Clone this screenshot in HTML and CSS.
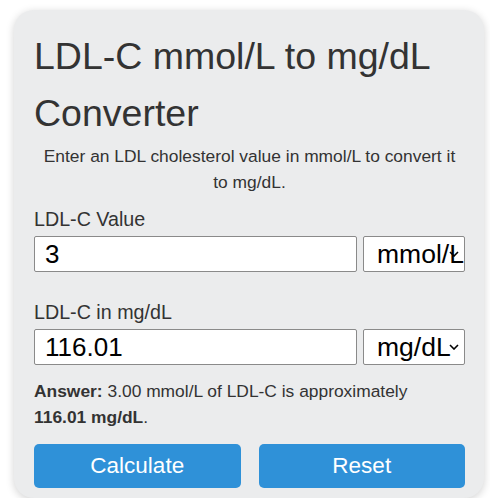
FILE: index.html
```html
<!DOCTYPE html>
<html>
<head>
<meta charset="utf-8">
<link rel="stylesheet" href="styles.css">
</head>
<body>
<div class="card">
  <h1 class="title">LDL-C mmol/L to mg/dL Converter</h1>
  <p class="intro">Enter an LDL cholesterol value in mmol/L to convert it to mg/dL.</p>
  <div class="field">
    <label class="label">LDL-C Value</label>
    <div class="row">
      <input class="num" type="text" value="3">
      <span class="unit-wrap">
        <select class="unit"><option>mmol/L</option></select>
        <svg class="chev" width="10" height="6" viewBox="0 0 10 6"><path d="M1 1 L5 5 L9 1" fill="none" stroke="#000" stroke-width="1.6"/></svg>
      </span>
    </div>
  </div>
  <div class="field">
    <label class="label">LDL-C in mg/dL</label>
    <div class="row">
      <input class="num" type="text" value="116.01">
      <span class="unit-wrap">
        <select class="unit"><option>mg/dL</option></select>
        <svg class="chev" width="10" height="6" viewBox="0 0 10 6"><path d="M1 1 L5 5 L9 1" fill="none" stroke="#000" stroke-width="1.6"/></svg>
      </span>
    </div>
  </div>
  <p class="answer"><b>Answer:</b> 3.00 mmol/L of LDL-C is approximately <b>116.01 mg/dL</b>.</p>
  <div class="buttons">
    <button class="btn">Calculate</button>
    <button class="btn">Reset</button>
  </div>
</div>
</body>
</html>
```
FILE: styles.css
```css
html, body {
  margin: 0;
  padding: 0;
  background: #fff;
}
body {
  font-family: "Liberation Sans", Arial, sans-serif;
  color: #333;
  line-height: 1.6;
  padding: 10px 6px 0 14px;
}
.card {
  width: 470px;
  height: 488px;
  box-sizing: border-box;
  background: #ebeced;
  border-radius: 20px;
  box-shadow: 0 2px 8px rgba(0, 0, 0, 0.18);
  padding: 18px 19px 10px 20px;
}
.title {
  margin: 0;
  font-size: 37.5px;
  font-weight: normal;
  line-height: 57px;
}
.intro {
  margin: 2px 0 0;
  padding: 0 5px;
  font-size: 17.4px;
  line-height: 25.6px;
  text-align: center;
}
.field {
  margin-top: 9px;
}
.field + .field {
  margin-top: 25px;
}
.label {
  display: block;
  font-size: 19.7px;
  line-height: 30px;
  margin-bottom: 2px;
}
.row {
  display: flex;
  gap: 6px;
}
.num {
  flex: 1;
  min-width: 0;
  height: 36px;
  box-sizing: border-box;
  border: 1px solid #8a8a8a;
  border-radius: 2px;
  background: #fff;
  font-family: "Liberation Sans", Arial, sans-serif;
  font-size: 26px;
  color: #000;
  padding: 0 10px;
}
.unit-wrap {
  position: relative;
  width: 102px;
  height: 36px;
}
.unit {
  appearance: none;
  -webkit-appearance: none;
  width: 102px;
  height: 36px;
  box-sizing: border-box;
  border: 1px solid #8a8a8a;
  border-radius: 2px;
  background: #fff;
  font-family: "Liberation Sans", Arial, sans-serif;
  font-size: 26.5px;
  color: #000;
  padding: 0 0 0 13px;
  overflow: hidden;
}
.chev {
  position: absolute;
  right: 6px;
  top: 15px;
  pointer-events: none;
}
.answer {
  margin: 14px 0 0;
  padding-right: 12px;
  font-size: 17.4px;
  line-height: 25.6px;
}
.buttons {
  display: flex;
  gap: 18px;
  margin-top: 14px;
}
.btn {
  flex: 1;
  height: 44px;
  border: none;
  border-radius: 5px;
  background: #2f91d8;
  color: #fff;
  font-family: "Liberation Sans", Arial, sans-serif;
  font-size: 22.5px;
}
```
